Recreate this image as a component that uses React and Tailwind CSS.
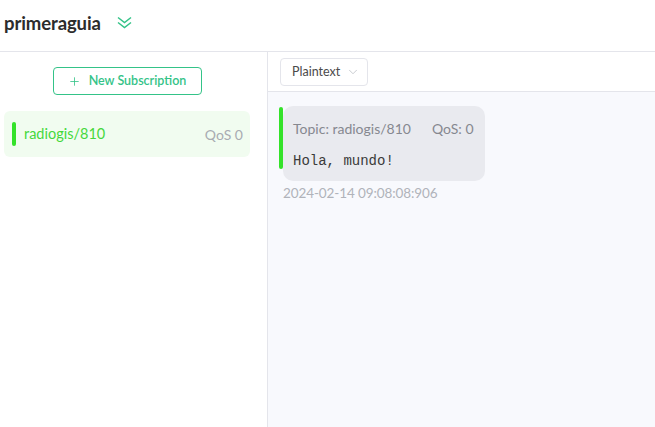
import { Plus, ChevronDown } from "lucide-react";

export default function App() {
  return (
    <div
      className="h-[427px] w-[655px] overflow-hidden bg-white flex flex-col"
      style={{ fontFamily: "Lato, 'Noto Sans', sans-serif" }}
    >
      {/* header */}
      <div className="h-[52px] shrink-0 border-b border-[#e4e5eb] flex items-center pl-[4px] pb-[3px]">
        <h1 className="text-[18.5px] font-bold text-[#2c2c2c] tracking-[-0.1px]">primeraguia</h1>
        <svg className="ml-[16px] -mt-[4px]" width="15" height="13" viewBox="0 0 15 13" fill="none" stroke="#34c388" strokeWidth="1.5">
          <path d="M1 1.5 L7.5 6.5 L14 1.5" />
          <path d="M1 6.5 L7.5 11.5 L14 6.5" />
        </svg>
      </div>

      <div className="flex flex-1 min-h-0">
        {/* subscriptions */}
        <div className="w-[268px] shrink-0 border-r border-[#e4e5eb] flex flex-col">
          <div className="flex justify-center pt-[15px] pr-[13px]">
            <button className="h-[28px] w-[149px] border border-[#34c388] rounded-[4px] flex items-center justify-center gap-[8px] pt-[1px] text-[12.5px] font-semibold text-[#34c388]">
              <Plus className="w-[13px] h-[13px]" strokeWidth={1.5} />
              New Subscription
            </button>
          </div>
          <div className="mt-[16px] ml-[4px] w-[246px] h-[46px] rounded-[6px] bg-[#f1fcf0] flex items-center pl-[8px] pr-[7px]">
            <div className="w-[4px] h-[24px] rounded-[2px] bg-[#34e22a]" />
            <span className="ml-[8px] text-[14.5px] text-[#45d83c]">radiogis/810</span>
            <span className="ml-auto text-[14px] text-[#a8abb2]">QoS 0</span>
          </div>
        </div>

        {/* messages */}
        <div className="flex-1 flex flex-col bg-[#f8f9fd]">
          <div className="h-[40px] shrink-0 bg-white border-b border-[#e4e5eb] flex items-center pl-[12px]">
            <div className="h-[28px] w-[88px] border border-[#e4e5eb] rounded-[4px] flex items-center pl-[11px] pt-[2px] gap-[6px] text-[12.5px] text-[#4a4a4a]">
              Plaintext
              <ChevronDown className="w-[14px] h-[14px] text-[#b8bbc2] -mt-[2px]" strokeWidth={1.3} />
            </div>
          </div>
          <div className="pl-[11px] pt-[14px]">
            <div className="flex">
              <div className="w-[4px] h-[62px] mt-[1px] rounded-[2px] bg-[#34e22a]" />
              <div className="w-[202px] h-[75px] rounded-[10px] bg-[#e9eaef] pl-[10px] pt-[12px]">
                <div className="text-[14px] text-[#86888f] flex">
                  <span>Topic: radiogis/810</span>
                  <span className="ml-[21px]">QoS: 0</span>
                </div>
                <div
                  className="mt-[12px] text-[14px] text-[#3a3a3a]"
                  style={{ fontFamily: "'Liberation Mono', monospace" }}
                >
                  Hola, mundo!
                </div>
              </div>
            </div>
            <div className="ml-[4px] mt-[2px] text-[13.5px] tracking-[-0.1px] text-[#b0b3ba]">2024-02-14 09:08:08:906</div>
          </div>
        </div>
      </div>
    </div>
  );
}
